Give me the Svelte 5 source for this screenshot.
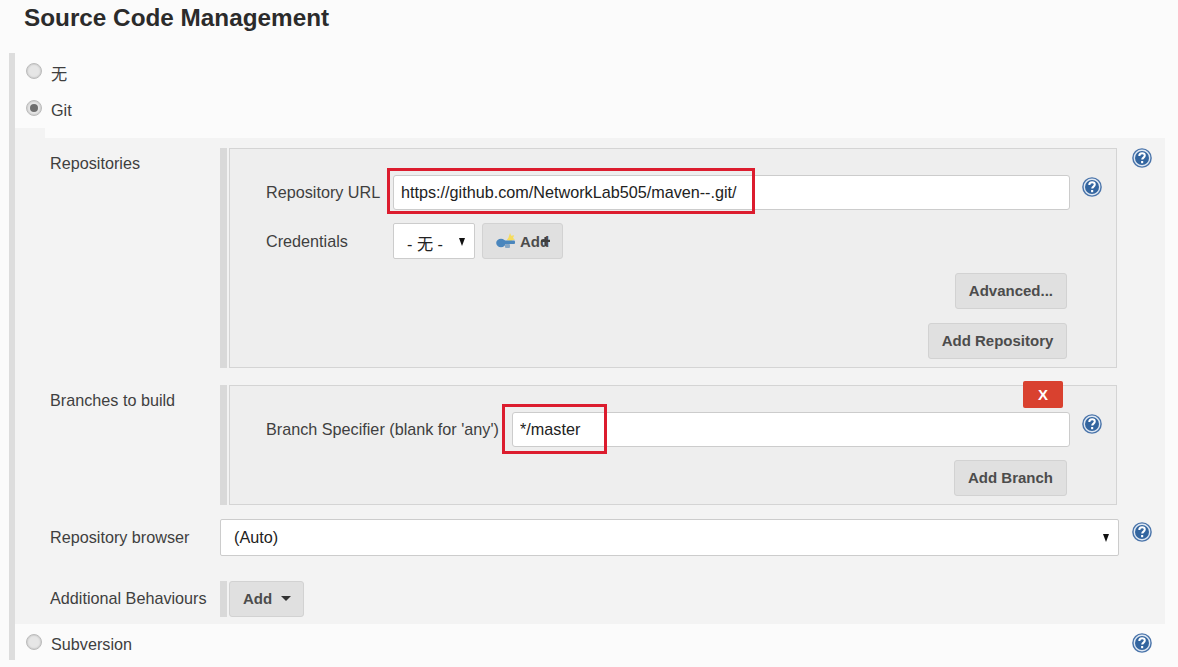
<script lang="ts">
  // Jenkins job config: Source Code Management section
  let url = $state('https://github.com/NetworkLab505/maven--.git/');
  let branch = $state('*/master');
  let scm = $state('git');
</script>

{#snippet help()}
  <svg class="help" viewBox="0 0 20 20" width="20" height="20" aria-hidden="true">
    <circle cx="10" cy="10" r="9.8" fill="#4a74aa" />
    <circle cx="10" cy="10" r="8.4" fill="#dfe8f3" />
    <circle cx="10" cy="10" r="7" fill="#33659f" />
    <path d="M7.300 8c0-1.700 1.200-2.700 2.800-2.700s2.700 1 2.700 2.300c0 2-2.600 2-2.600 4" fill="none" stroke="#fff" stroke-width="2" />
    <rect x="9.100" y="13" width="2.100" height="2.200" fill="#fff" />
  </svg>
{/snippet}

<div class="page">
  <h2>Source Code Management</h2>

  <div class="scm">
    <label class="radio-row">
      <input type="radio" bind:group={scm} value="none" />
      <span class="radio" ></span>
      <span class="cjk">无</span>
    </label>
    <label class="radio-row">
      <input type="radio" bind:group={scm} value="git" />
      <span class="radio" class:on={scm === 'git'}></span>
      <span>Git</span>
    </label>

    <div class="notch"></div>
    <div class="git">
      <div class="row first">
        <div class="label">Repositories</div>
        <div class="panel-wrap">
          <div class="panel">
            <div class="field">
              <div class="flabel">Repository URL</div>
              <div class="control">
                <input class="text" bind:value={url} />
                <span class="mark mark-url"></span>
              </div>
              {@render help()}
            </div>
            <div class="field cred">
              <div class="flabel">Credentials</div>
              <div class="cred-controls">
                <div class="select small"><span>- 无 -</span><span class="arrow"></span></div>
                <button class="btn key">
                  <svg class="key-icon" viewBox="0 0 20 20" width="20" height="20" aria-hidden="true">
                    <path d="M14 2l1.200 2.800 3-.6-1.200 2.800 2 1.600-3 .6-1 2.400-1.800-2-2.600-.4 1.800-2.400z" fill="#f5dc5e" />
                    <rect x="6" y="9.500" width="13" height="3.400" rx="1" fill="#4a86bd" />
                    <ellipse cx="5" cy="12" rx="4.800" ry="4.200" fill="#4a86bd" />
                    <rect x="9" y="13" width="5" height="4" rx="1" fill="#86a6c4" />
                  </svg>
                  <span>Add</span>
                  <svg class="plus" viewBox="0 0 9 9" width="9" height="9" aria-hidden="true">
                    <path d="M4.500 0v9M0 3.800h9" stroke="#3f3f3f" stroke-width="2.200" />
                  </svg>
                </button>
              </div>
            </div>
            <div class="actions adv"><button class="btn">Advanced...</button></div>
            <div class="actions repo"><button class="btn">Add Repository</button></div>
          </div>
        </div>
        <div class="help-cell top">{@render help()}</div>
      </div>

      <div class="row branches">
        <div class="label">Branches to build</div>
        <div class="panel-wrap">
          <div class="panel">
            <button class="x">X</button>
            <div class="field">
              <div class="flabel wide">Branch Specifier (blank for 'any')</div>
              <div class="control">
                <input class="text" bind:value={branch} />
                <span class="mark mark-branch"></span>
              </div>
              {@render help()}
            </div>
            <div class="actions branch"><button class="btn">Add Branch</button></div>
          </div>
        </div>
      </div>

      <div class="row browser">
        <div class="label">Repository browser</div>
        <div class="select big"><span>(Auto)</span><span class="arrow"></span></div>
        <div class="help-cell">{@render help()}</div>
      </div>

      <div class="row behaviours">
        <div class="label">Additional Behaviours</div>
        <div class="panel-wrap">
          <button class="btn drop">Add <span class="caret"></span></button>
        </div>
      </div>
    </div>

    <label class="radio-row last">
      <input type="radio" bind:group={scm} value="svn" />
      <span class="radio"></span>
      <span>Subversion</span>
      <span class="help-end">{@render help()}</span>
    </label>
  </div>
</div>

<style>
  :global(body) {
    margin: 0;
    background: #fbfbfb;
  }
  .page {
    height: 667px;
    overflow: hidden;
    font-family: "Liberation Sans", "Noto Sans CJK SC", sans-serif;
    font-size: 16.2px;
    color: #3f3f3f;
  }
  h2 {
    margin: 0;
    padding-left: 24px;
    height: 53px;
    box-sizing: border-box;
    padding-top: 4px;
    font-size: 24.300px;
    line-height: 28px;
    font-weight: 700;
    color: #2b2b2b;
  }
  .scm {
    margin-left: 9px;
    width: 1156px;
    box-sizing: border-box;
    border-left: 6px solid #ddd;
    padding-top: 2px;
  }
  .radio-row {
    display: flex;
    align-items: center;
    gap: 9px;
    height: 37px;
    padding-left: 11px;
  }
  .radio-row input {
    display: none;
  }
  .radio {
    position: relative;
    width: 14px;
    height: 14px;
    margin-top: -5px;
    border-radius: 50%;
    border: 1px solid #bbb;
    background: #e6e6e6;
    box-shadow: inset 0 0 2px #aaa;
  }
  .radio.on::after {
    content: "";
    position: absolute;
    left: 3px;
    top: 3px;
    width: 8px;
    height: 8px;
    border-radius: 50%;
    background: #6e6e6e;
  }
  .cjk {
    margin-top: -2px;
  }
  .notch {
    width: 30px;
    height: 10px;
    margin-top: -1px;
    background: #f3f3f3;
  }
  .git {
    background: #f3f3f3;
    padding-top: 10px;
    height: 486px;
    box-sizing: border-box;
  }
  .row {
    display: grid;
    grid-template-columns: 170px 899px 46px;
    padding-left: 35px;
  }
  .label {
    padding-top: 5px;
    line-height: 20px;
  }
  .panel-wrap {
    display: flex;
    width: 897px;
    border-left: 7px solid #d9d9d9;
    box-sizing: border-box;
    padding-left: 2px;
  }
  .panel {
    position: relative;
    flex: 1;
    box-sizing: border-box;
    border: 1px solid #d4d4d4;
    background: #eee;
    padding: 26px 0 0 36px;
  }
  .first .panel {
    height: 220px;
  }
  .branches {
    margin-top: 17px;
  }
  .branches .panel {
    height: 120px;
  }
  .field {
    display: flex;
    align-items: center;
    height: 35px;
  }
  .flabel {
    width: 127px;
    flex: none;
  }
  .flabel.wide {
    width: 246px;
  }
  .control {
    position: relative;
    flex: 1;
    margin-right: 12px;
    height: 35px;
  }
  .text {
    width: 100%;
    height: 35px;
    box-sizing: border-box;
    border: 1px solid #ccc;
    border-radius: 3px;
    background: #fff;
    padding: 0 7px;
    font: inherit;
    color: #222;
    outline: none;
  }
  .mark {
    position: absolute;
    border: 3px solid #dc1c2e;
    box-sizing: border-box;
    pointer-events: none;
  }
  .mark-url {
    left: -6px;
    top: -7px;
    width: 368px;
    height: 46px;
  }
  .mark-branch {
    left: -10px;
    top: -8px;
    width: 105px;
    height: 50px;
  }
  .help {
    flex: none;
    display: block;
  }
  .field .help {
    margin-right: 14px;
    margin-top: -11px;
  }
  .cred {
    margin-top: 13px;
    height: 36px;
  }
  .cred-controls {
    display: flex;
    gap: 7px;
  }
  .select {
    display: flex;
    align-items: center;
    justify-content: space-between;
    box-sizing: border-box;
    border: 1px solid #ccc;
    border-radius: 2px;
    background: #fff;
    color: #222;
  }
  .select.small {
    width: 82px;
    height: 36px;
    padding: 0 9px 0 13px;
  }
  .select.small span:first-child {
    padding-top: 4px;
  }
  .select.big {
    width: 899px;
    height: 37px;
    padding: 0 9px 0 13px;
  }
  .arrow {
    width: 0;
    height: 0;
    margin-top: 1px;
    border-left: 3.500px solid transparent;
    border-right: 3.500px solid transparent;
    border-top: 8px solid #111;
  }
  .btn {
    box-sizing: border-box;
    height: 36px;
    border: 1px solid #d2d2d2;
    border-radius: 3px;
    background: #e0e0e0;
    color: #4c4c4c;
    font: inherit;
    font-size: 15px;
    font-weight: 700;
    padding: 0 13px 2px;
    white-space: nowrap;
  }
  .key {
    position: relative;
    width: 81px;
    display: flex;
    align-items: center;
    gap: 4px;
    padding: 0 0 0 13px;
  }
  .plus {
    position: absolute;
    left: 58px;
    top: 13px;
  }
  .actions {
    display: flex;
    justify-content: flex-end;
    padding-right: 49px;
  }
  .adv {
    margin-top: 14px;
  }
  .repo {
    margin-top: 14px;
  }
  .repo .btn {
    width: 139px;
    padding: 0 0 2px;
  }
  .branch {
    margin-top: 13px;
  }
  .x {
    position: absolute;
    right: 53px;
    top: -5px;
    width: 40px;
    height: 27px;
    border: none;
    border-radius: 2px;
    background: #d9412f;
    color: #fff;
    font: inherit;
    font-size: 15px;
    font-weight: 700;
    padding: 0;
  }
  .help-cell {
    padding-left: 13px;
  }
  .browser {
    margin-top: 14px;
  }
  .browser .label {
    padding-top: 8px;
  }
  .browser .help-cell {
    padding-top: 3px;
  }
  .behaviours {
    margin-top: 25px;
  }
  .behaviours .label {
    padding-top: 7px;
  }
  .drop {
    width: 75px;
    display: flex;
    align-items: center;
    gap: 9px;
    padding: 0 0 2px 13px;
  }
  .caret {
    width: 0;
    height: 0;
    border-left: 5px solid transparent;
    border-right: 5px solid transparent;
    border-top: 5px solid #333;
  }
  .last {
    position: relative;
    height: 36px;
    box-sizing: border-box;
    padding-top: 4px;
  }
  .help-end {
    position: absolute;
    left: 1117px;
    top: 9px;
  }
</style>
